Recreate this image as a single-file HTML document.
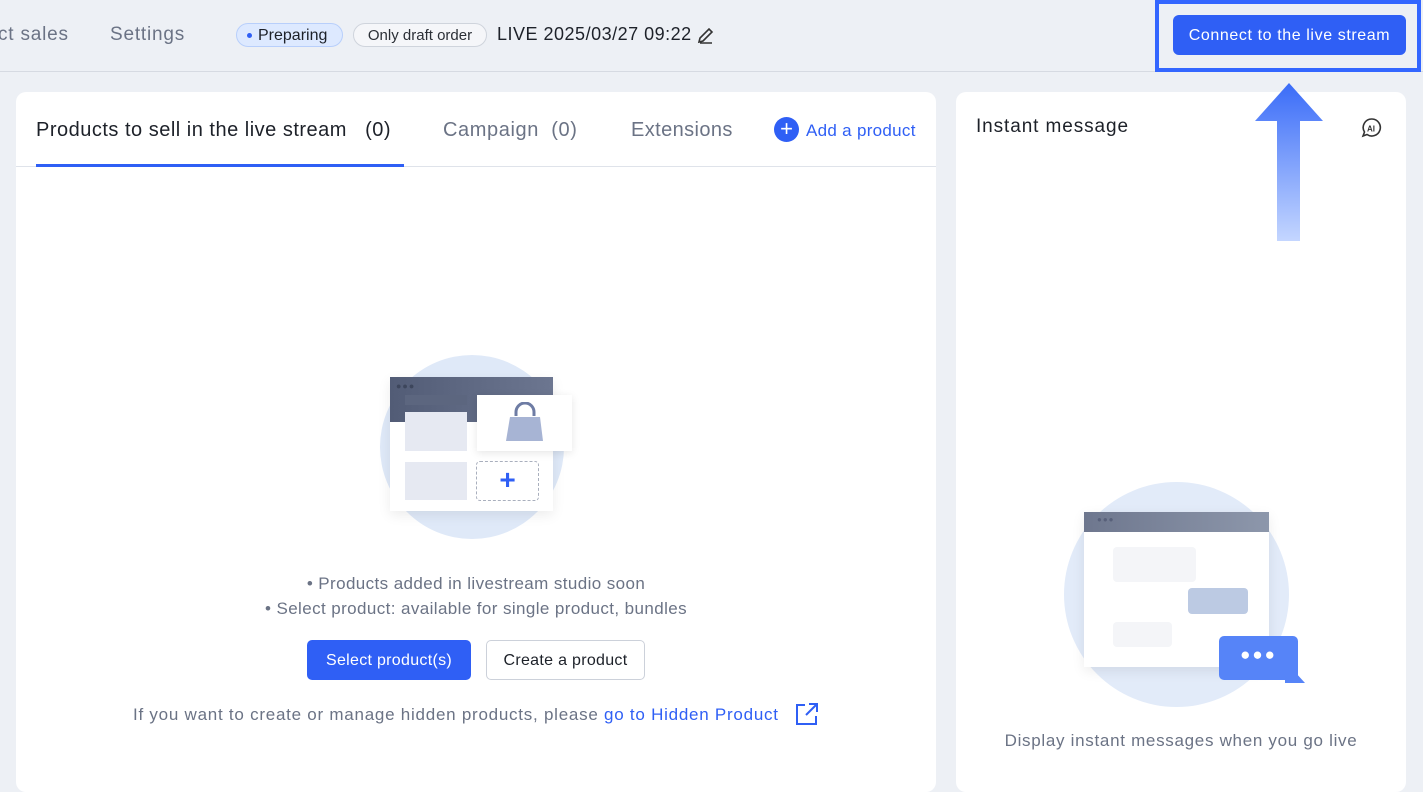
<!DOCTYPE html>
<html><head><meta charset="utf-8"><style>
*{box-sizing:border-box;margin:0;padding:0}
body{width:1423px;height:780px;background:#edf0f5;font-family:"Liberation Sans",sans-serif;position:relative;overflow:hidden;color:#1d2129}
.a{position:absolute;white-space:nowrap}
</style></head><body>
<div class="a" style="left:0;top:71px;width:1423px;height:1px;background:#d6dae2"></div>
<div class="a" style="left:-2px;top:24px;font-size:19px;color:#6b7385;letter-spacing:0.8px">ct sales</div>
<div class="a" style="left:110px;top:24px;font-size:19px;color:#6b7385;letter-spacing:0.8px">Settings</div>
<div class="a" style="left:236px;top:23px;width:107px;height:24px;border-radius:12px;background:#dde9ff;border:1px solid #b8cffb;font-size:16px;line-height:24px;padding-left:21px;color:#1d2129">Preparing</div>
<div class="a" style="left:247px;top:33px;width:5px;height:5px;border-radius:50%;background:#2f5ff5"></div>
<div class="a" style="left:353px;top:23px;width:134px;height:24px;border-radius:12px;background:#f5f6f9;border:1px solid #cfd4dc;font-size:15px;line-height:23px;text-align:center;color:#2b2f36">Only draft order</div>
<div class="a" style="left:497px;top:24px;font-size:18px;color:#1d2129;letter-spacing:0.5px">LIVE 2025/03/27 09:22</div>
<svg class="a" style="left:696px;top:26px" width="20" height="20" viewBox="0 0 20 20" fill="none" stroke="#333" stroke-width="1.6"><path d="M3 16l1-4 9-9 3 3-9 9z M4 17h12"/></svg>

<div class="a" style="left:1155px;top:0;width:266px;height:72px;border:4px solid #3366ff"></div>
<div class="a" style="left:1173px;top:15px;width:233px;height:40px;border-radius:6px;background:#2f5ff5;color:#fff;font-size:16px;line-height:41px;text-align:center;letter-spacing:0.6px">Connect to the live stream</div>

<div class="a" style="left:16px;top:92px;width:920px;height:700px;background:#fff;border-radius:10px"></div>
<div class="a" style="left:16px;top:166px;width:920px;height:1px;background:#dfe3ea"></div>
<div class="a" style="left:36px;top:164px;width:368px;height:3px;background:#2f5ff5"></div>
<div class="a" style="left:36px;top:119px;font-size:20px;color:#1d2129;letter-spacing:0.5px">Products to sell in the live stream&nbsp;&nbsp;&nbsp;(0)</div>
<div class="a" style="left:443px;top:119px;font-size:20px;color:#6b7385;letter-spacing:0.6px">Campaign&nbsp;&nbsp;(0)</div>
<div class="a" style="left:631px;top:119px;font-size:20px;color:#6b7385;letter-spacing:0.4px">Extensions</div>
<div class="a" style="left:774px;top:117px;width:25px;height:25px;border-radius:50%;background:#2f5ff5;color:#fff;font-size:22px;line-height:24px;text-align:center">+</div>
<div class="a" style="left:806px;top:121px;font-size:17px;color:#2f5ff5;letter-spacing:0.3px">Add a product</div>

<div class="a" style="left:380px;top:355px;width:184px;height:184px;border-radius:50%;background:#dfe9f8"></div>
<div class="a" style="left:390px;top:377px;width:163px;height:134px;background:#fff;box-shadow:0 4px 12px rgba(0,0,0,.08)"></div>
<div class="a" style="left:390px;top:377px;width:163px;height:45px;background:linear-gradient(90deg,#525c76,#6c7690)"></div>
<div class="a" style="left:396px;top:381px;font-size:9px;color:#3d465c;letter-spacing:1px">●●●</div>
<div class="a" style="left:405px;top:395px;width:62px;height:10px;background:#5c667f"></div>
<div class="a" style="left:405px;top:412px;width:62px;height:39px;background:#e6e9f2"></div>
<div class="a" style="left:405px;top:462px;width:62px;height:38px;background:#e6e9f2"></div>
<div class="a" style="left:477px;top:395px;width:95px;height:56px;background:#fff;box-shadow:0 2px 8px rgba(0,0,0,.1)"></div>
<svg class="a" style="left:504px;top:402px" width="42" height="42"><path d="M12 14v-4a9 9 0 0 1 18 0v4" fill="none" stroke="#6e7ca4" stroke-width="3"/><path d="M6 15h30l3 24H2z" fill="#a7b4d4"/></svg>
<div class="a" style="left:476px;top:461px;width:63px;height:40px;border:1.5px dashed #a9afbd;border-radius:4px;color:#2f5ff5;font-size:28px;line-height:36px;text-align:center;font-weight:bold">+</div>

<div class="a" style="left:0;top:571px;width:952px;text-align:center;font-size:17px;color:#6b7385;line-height:25px;letter-spacing:0.4px">• Products added in livestream studio soon<br>• Select product: available for single product, bundles</div>
<div class="a" style="left:307px;top:640px;width:164px;height:40px;border-radius:5px;background:#2f5ff5;color:#fff;font-size:16px;line-height:41px;text-align:center;letter-spacing:0.3px">Select product(s)</div>
<div class="a" style="left:486px;top:640px;width:159px;height:40px;border-radius:5px;border:1px solid #ccd1da;color:#1d2129;font-size:16px;line-height:39px;text-align:center;letter-spacing:0.3px">Create a product</div>
<div class="a" style="left:133px;top:705px;font-size:17px;color:#6b7385;letter-spacing:0.75px">If you want to create or manage hidden products, please <span style="color:#2f5ff5">go to Hidden Product</span></div>
<svg class="a" style="left:795px;top:702px" width="24" height="24" fill="none" stroke="#2f5ff5" stroke-width="2"><path d="M10 3H2v19h19v-8 M14 2h8v8 M22 2L11 13"/></svg>

<div class="a" style="left:956px;top:92px;width:450px;height:700px;background:#fff;border-radius:10px"></div>
<div class="a" style="left:976px;top:116px;font-size:19px;color:#1d2129;letter-spacing:0.9px">Instant message</div>
<svg class="a" style="left:1360px;top:116px" width="24" height="24" fill="none" stroke="#333" stroke-width="1.6"><path d="M12 3a8.5 8.5 0 1 1-5 15.5L3 20l1.5-4A8.5 8.5 0 0 1 12 3z"/><text x="7" y="15.5" font-size="8" font-family="Liberation Sans" font-weight="bold" fill="#333" stroke="none">AI</text></svg>

<svg class="a" style="left:1250px;top:80px" width="80" height="165"><defs><linearGradient id="g" x1="0" y1="0" x2="0" y2="1"><stop offset="0" stop-color="#3a6cf8"/><stop offset="1" stop-color="#c4d6ff"/></linearGradient></defs><path d="M39 3L73 41H50V161H27V41H5z" fill="url(#g)"/></svg>

<div class="a" style="left:1064px;top:482px;width:225px;height:225px;border-radius:50%;background:#e2ebf9"></div>
<div class="a" style="left:1084px;top:512px;width:185px;height:155px;background:#fff;box-shadow:0 4px 12px rgba(0,0,0,.08)"></div>
<div class="a" style="left:1084px;top:512px;width:185px;height:20px;background:linear-gradient(90deg,#6e778e,#8d97ab)"></div>
<div class="a" style="left:1097px;top:515px;font-size:8px;color:#58607a;letter-spacing:1px">●●●</div>
<div class="a" style="left:1113px;top:547px;width:83px;height:35px;border-radius:4px;background:#f4f5f8"></div>
<div class="a" style="left:1188px;top:588px;width:60px;height:26px;border-radius:4px;background:#bccae3"></div>
<div class="a" style="left:1113px;top:622px;width:59px;height:25px;border-radius:4px;background:#f4f5f8"></div>
<div class="a" style="left:1219px;top:636px;width:79px;height:44px;border-radius:5px;background:#5684f8"></div>
<svg class="a" style="left:1285px;top:668px" width="24" height="16"><path d="M0 0h10v4l10 11H0z" fill="#5684f8"/></svg>
<div class="a" style="left:1219px;top:645px;width:79px;text-align:center;color:#fff;font-size:17px;letter-spacing:2px">●●●</div>
<div class="a" style="left:956px;top:731px;width:450px;text-align:center;font-size:17px;color:#6b7385;letter-spacing:0.7px">Display instant messages when you go live</div>
</body></html>
